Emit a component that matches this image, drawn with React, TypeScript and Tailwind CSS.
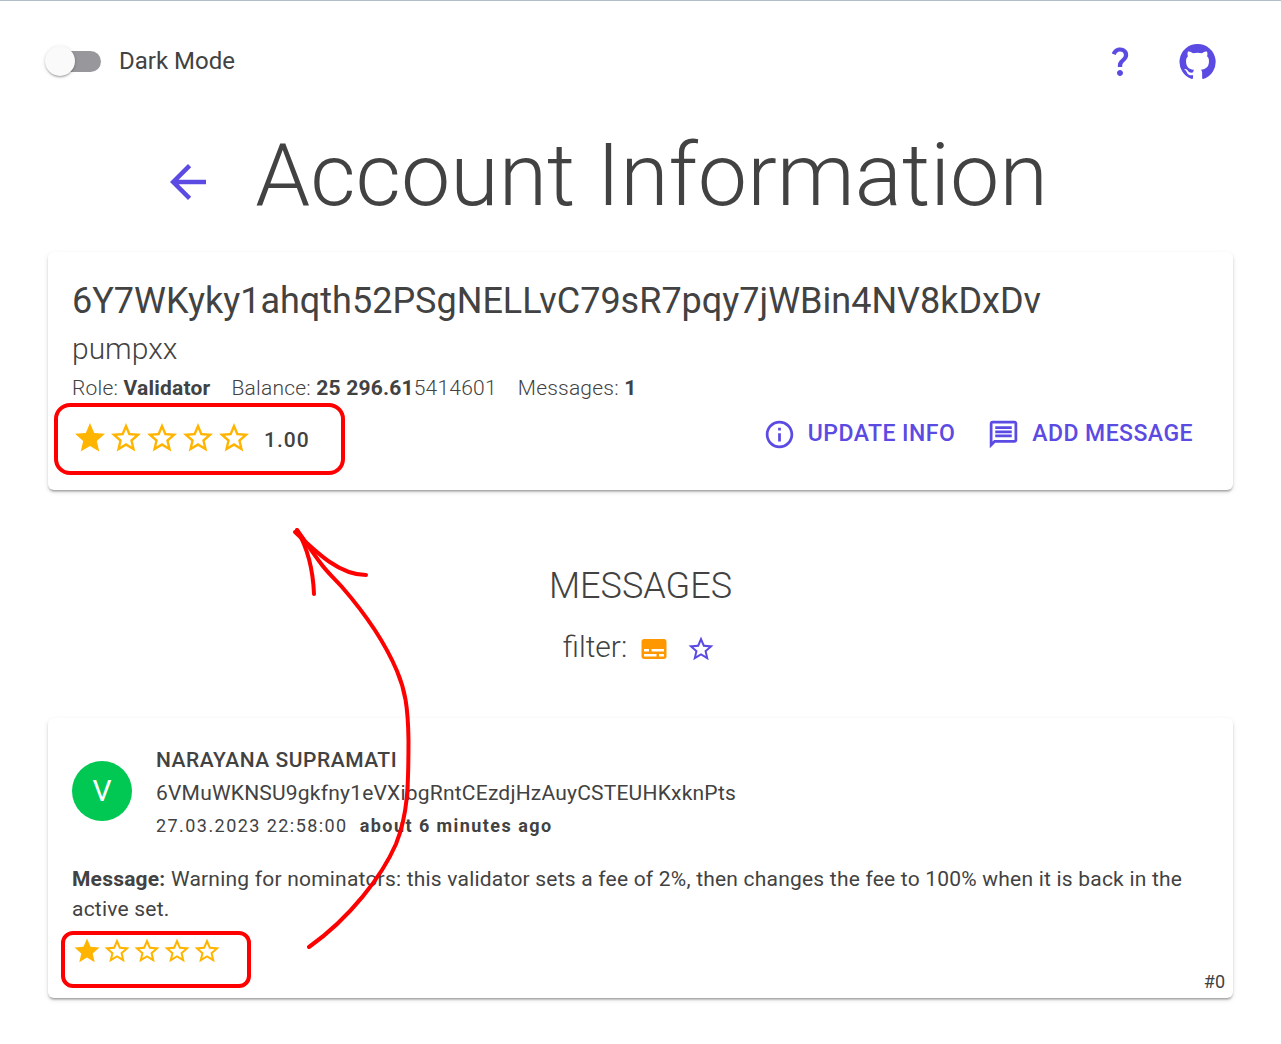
import React from "react";
import {
  MdArrowBack,
  MdInfoOutline,
  MdQuestionMark,
  MdStar,
  MdStarBorder,
  MdSubtitles,
} from "react-icons/md";

function GitHubIcon() {
  return (
    <svg viewBox="0 0 24 24" className="size-[39px]" fill="currentColor" aria-hidden="true">
      <path d="M12 1.27a11 11 0 00-3.48 21.46c.55.09.73-.28.73-.55v-1.84c-3.03.64-3.67-1.46-3.67-1.46-.55-1.29-1.28-1.65-1.28-1.65-.92-.65.1-.65.1-.65 1.1 0 1.73 1.1 1.73 1.1.92 1.65 2.57 1.2 3.21.92a2 2 0 01.64-1.47c-2.47-.27-5.04-1.19-5.04-5.5 0-1.1.46-2.1 1.2-2.84a3.76 3.76 0 010-2.93s.91-.28 3.11 1.1c1.8-.49 3.7-.49 5.5 0 2.1-1.38 3.02-1.1 3.02-1.1a3.76 3.76 0 01.1 2.93c.83.74 1.2 1.74 1.2 2.94 0 4.21-2.57 5.13-5.04 5.4.45.37.82.92.82 2.02v3.03c0 .27.1.64.73.55A11 11 0 0012 1.27" />
    </svg>
  );
}

function MessageIcon() {
  return (
    <svg viewBox="0 0 24 24" className="size-[33px]" fill="currentColor" aria-hidden="true">
      <path d="M4 4h16v12H5.17L4 17.17V4m0-2c-1.1 0-1.99.9-1.99 2L2 22l4-4h14c1.1 0 2-.9 2-2V4c0-1.1-.9-2-2-2H4zm2 10h12v2H6v-2zm0-3h12v2H6V9zm0-3h12v2H6V6z" />
    </svg>
  );
}

function Rating({ value, large = false }: { value: number; large?: boolean }) {
  const size = large ? "size-9" : "size-[30px]";
  return (
    <span role="img" aria-label={`${value} of 5 stars`} className="flex text-[#ffb400]">
      {[1, 2, 3, 4, 5].map((n) =>
        n <= value ? <MdStar key={n} className={size} /> : <MdStarBorder key={n} className={size} />
      )}
    </span>
  );
}

function Card({ children, className = "" }: { children: React.ReactNode; className?: string }) {
  return (
    <section
      className={`rounded-md bg-white px-6 pt-[25px] shadow-[0_3px_2px_-2px_rgba(0,0,0,0.2),0_2px_2px_0_rgba(0,0,0,0.14),0_2px_5px_0_rgba(0,0,0,0.12)] ${className}`}
    >
      {children}
    </section>
  );
}

function HandArrow() {
  return (
    <svg
      viewBox="0 0 80 424"
      className="pointer-events-none absolute top-[525px] left-[290px] h-[424px] w-20 overflow-visible"
      fill="none"
      stroke="#ff0000"
      strokeWidth="4"
      strokeLinecap="round"
      aria-hidden="true"
    >
      <path d="M19 421 C60 392 92 350 106 318 C118 288 118.5 260 118.5 214 C118 180 115 164 107 145 C93 112 72 84 52 61 C44 52 38 47 32 39 C23 27 15 15 7 4" />
      <path d="M5 6 C28 28 50 49 76 49" />
      <path d="M7 4 C17 21 23 43 24 68" />
    </svg>
  );
}

export default function App() {
  return (
    <div className="relative min-h-screen border-t border-[#b0bec5] bg-white px-12 pb-11 font-['Roboto',sans-serif] text-[#424242]">
      <header className="flex h-[120px] items-center justify-between">
        <label className="flex cursor-pointer items-center text-2xl">
          <input type="checkbox" role="switch" className="peer sr-only" />
          <span className="relative ml-0.5 mr-[18px] h-[21px] w-[51px] rounded-full bg-[#98989c] peer-checked:bg-[#5b4be2]">
            <span className="absolute -top-[5px] -left-[5px] size-[30px] rounded-full bg-[#fafafa] shadow-[0_2px_2px_-1px_rgba(0,0,0,0.2),0_1px_2px_0_rgba(0,0,0,0.14),0_1px_4px_0_rgba(0,0,0,0.12)]" />
          </span>
          Dark Mode
        </label>
        <nav className="flex items-center gap-10 pr-4 text-[#5b4be2]">
          <a href="#help" aria-label="Help">
            <MdQuestionMark className="size-9" />
          </a>
          <a href="#github" aria-label="GitHub">
            <GitHubIcon />
          </a>
        </nav>
      </header>

      <div className="mb-[23px] flex items-center justify-center gap-10 pr-[72px]">
        <button type="button" aria-label="Back" className="mt-3.5 text-[#5b4be2]">
          <MdArrowBack className="size-[54px]" />
        </button>
        <h1 className="text-[88px] leading-[108px] font-light">Account Information</h1>
      </div>

      <Card className="pb-6">
        <h2 className="text-4xl leading-[48px]">6Y7WKyky1ahqth52PSgNELLvC79sR7pqy7jWBin4NV8kDxDv</h2>
        <p className="text-3xl leading-[48px] font-light">pumpxx</p>
        <p className="flex gap-[21px] text-[21px] leading-[30px] font-light tracking-[0.01em]">
          <span>
            Role: <b className="font-bold">Validator</b>
          </span>
          <span>
            Balance: <b className="font-bold">25 296.61</b>5414601
          </span>
          <span>
            Messages: <b className="font-bold">1</b>
          </span>
        </p>
        <div className="flex h-[63px] items-center justify-between">
          <div className="relative flex items-center gap-3 pt-1.5">
            <Rating value={1} large />
            <span className="pt-1.5 text-[21px] font-medium tracking-wider">1.00</span>
            <span className="pointer-events-none absolute -top-[10px] -right-[35px] -left-[18px] h-[72px] rounded-2xl border-4 border-[#ff0000]" />
          </div>
          <div className="flex text-[23px] font-medium tracking-[0.02em] text-[#5b4be2]">
            <button type="button" className="flex items-center gap-3 px-4">
              <MdInfoOutline className="size-[33px]" />
              UPDATE INFO
            </button>
            <button type="button" className="flex items-center gap-3 px-4">
              <MessageIcon />
              ADD MESSAGE
            </button>
          </div>
        </div>
      </Card>

      <div className="mt-[72px] mb-[47px] flex flex-col items-center gap-[13px] font-light">
        <h2 className="text-4xl leading-[48px]">MESSAGES</h2>
        <div className="flex items-center text-3xl leading-[48px]">
          filter:
          <button type="button" aria-label="Filter by text" className="mt-1 ml-3 text-[#ff9800]">
            <MdSubtitles className="size-[30px]" />
          </button>
          <button type="button" aria-label="Filter by rating" className="mt-1 mr-0.5 ml-[17px] text-[#5b4be2]">
            <MdStarBorder className="size-[30px]" />
          </button>
        </div>
      </div>

      <Card>
        <div className="flex items-start gap-6 pt-px">
          <div className="mt-[17px] flex size-[60px] items-center justify-center rounded-full bg-[#00c853] text-3xl text-white">
            V
          </div>
          <div className="text-[21px] leading-[33px]">
            <h3 className="font-medium tracking-wide">NARAYANA SUPRAMATI</h3>
            <p className="tracking-[0.01em]">6VMuWKNSU9gkfny1eVXibgRntCEzdjHzAuyCSTEUHKxknPts</p>
            <p className="flex gap-3 text-lg leading-[32px] tracking-[0.08em]">
              <time>27.03.2023 22:58:00</time>
              <b>about 6 minutes ago</b>
            </p>
          </div>
        </div>
        <p className="mt-[22px] text-[21px] leading-[30px] tracking-[0.01em]">
          <b>Message:</b> Warning for nominators: this validator sets a fee of 2%, then changes the fee to 100%
          when it is back in the active set.
        </p>
        <div className="relative mt-3 w-fit">
          <Rating value={1} />
          <span className="pointer-events-none absolute -top-[5px] -right-[29px] -left-[11px] h-[57px] rounded-xl border-4 border-[#ff0000]" />
        </div>
        <p className="-mr-4 text-right text-lg leading-8">#0</p>
      </Card>

      <HandArrow />
    </div>
  );
}
